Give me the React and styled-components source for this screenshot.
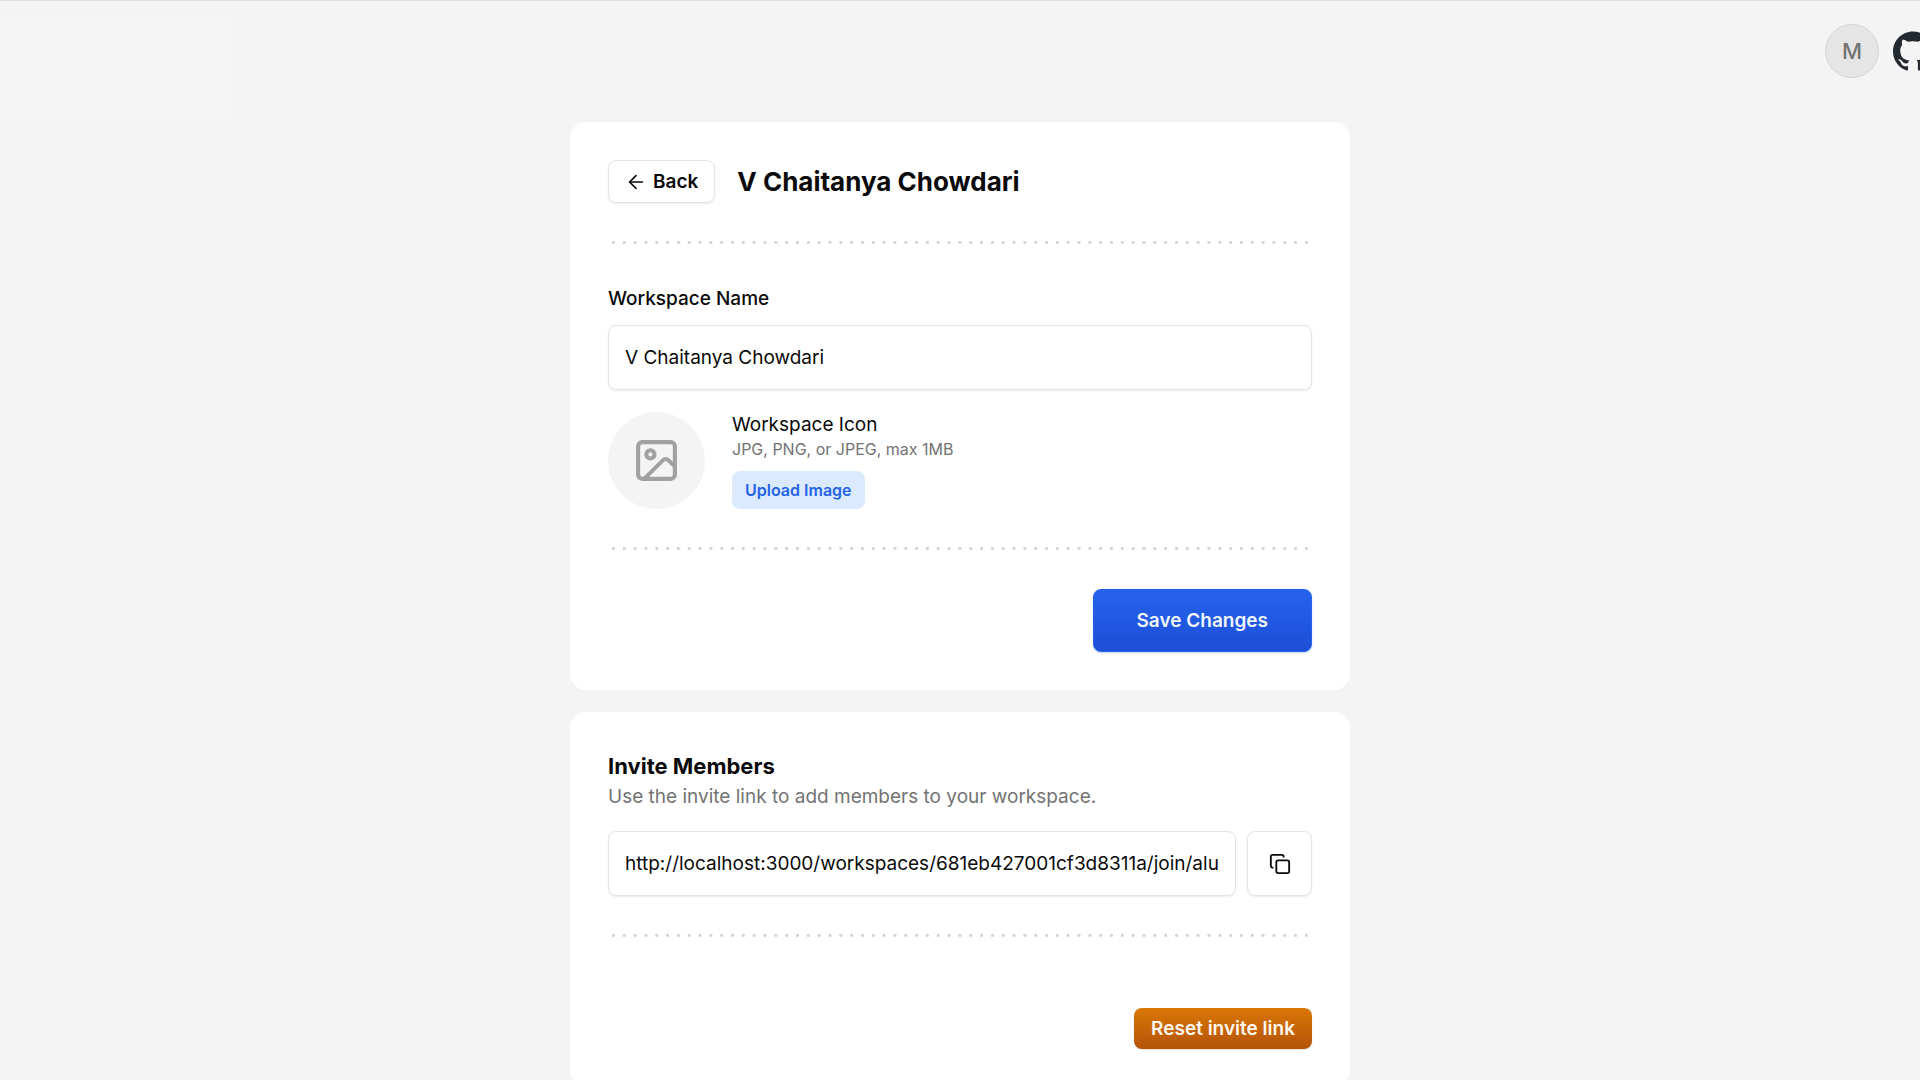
import React, { useState } from "react";
import styled, { createGlobalStyle, css } from "styled-components";
import { ArrowLeft, Copy, Image } from "lucide-react";
import { SiGithub } from "react-icons/si";

const GlobalStyle = createGlobalStyle`
  * {
    box-sizing: border-box;
  }

  body {
    margin: 0;
    background-color: #f4f4f4;
    color: #0a0a0a;
    font-family: Inter, "Liberation Sans", sans-serif;
    font-size: 19px;
    line-height: 24px;
    scrollbar-width: none;
  }

  button,
  input {
    font: inherit;
    color: inherit;
  }

  h1,
  h2,
  p {
    margin: 0;
  }
`;

const Page = styled.div`
  min-height: 100vh;
  border-top: 1px solid #e0e0e0;
  overflow-x: clip;
`;

const Header = styled.header`
  display: flex;
  justify-content: space-between;
  align-items: flex-start;
  padding-top: 16px;
`;

const LogoSpace = styled.div`
  width: 232px;
  height: 102px;
  background-color: #f5f5f5;
`;

const Actions = styled.div`
  display: flex;
  align-items: center;
  gap: 14px;
  padding-top: 7px;
  margin-right: -13px;
`;

const Avatar = styled.button`
  display: flex;
  align-items: center;
  justify-content: center;
  width: 54px;
  height: 54px;
  padding: 0;
  border: 1px solid #d4d4d4;
  border-radius: 50%;
  background-color: #e5e5e5;
  color: #737373;
  font-size: 22px;
  font-weight: 500;
  cursor: pointer;
`;

const GithubLink = styled.a`
  display: flex;
  color: #24292f;
`;

const Content = styled.main`
  display: flex;
  flex-direction: column;
  gap: 22px;
  width: 100%;
  max-width: 780px;
  margin: 0 auto;
  padding: 3px 0 22px;
`;

const Card = styled.section`
  padding: 38px;
  border-radius: 16px;
  background-color: #ffffff;
`;

const TitleRow = styled.div`
  display: flex;
  align-items: center;
  gap: 22px;
`;

const Title = styled.h1`
  font-size: 26px;
  line-height: 32px;
  font-weight: 700;
`;

const outlined = css`
  border: 1px solid #e5e5e5;
  border-radius: 8px;
  background-color: #ffffff;
  box-shadow: 0 1px 2px rgba(0, 0, 0, 0.08);
`;

const BackButton = styled.button`
  ${outlined}
  display: flex;
  align-items: center;
  gap: 6px;
  height: 43px;
  padding: 0 16px;
  font-weight: 600;
  cursor: pointer;
`;

const DottedLine = styled.hr`
  height: 3px;
  margin: ${(props) => props.$margin || "38px 0"};
  border: none;
  background-image: radial-gradient(circle, #d0d0d0 1px, transparent 2px);
  background-size: calc(100% / 65) 3px;
`;

const Field = styled.div`
  display: flex;
  flex-direction: column;
  gap: 14px;
`;

const Label = styled.label`
  font-weight: 500;
`;

const TextInput = styled.input`
  ${outlined}
  flex: 1;
  width: 100%;
  min-width: 0;
  min-height: 65px;
  padding: 0 16px;
  outline: none;
`;

const IconRow = styled.div`
  display: flex;
  align-items: center;
  gap: 27px;
  margin-top: 22px;
`;

const IconPreview = styled.div`
  display: flex;
  align-items: center;
  justify-content: center;
  width: 97px;
  height: 97px;
  border-radius: 50%;
  background-color: #f4f4f4;
  color: #a1a1a1;
`;

const IconInfo = styled.div`
  display: flex;
  flex-direction: column;
  align-items: flex-start;
`;

const Muted = styled.p`
  color: #737373;
  font-size: ${(props) => (props.$small ? "16px" : "19px")};
`;

const UploadButton = styled.button`
  height: 38px;
  margin-top: 10px;
  padding: 0 13px;
  border: none;
  border-radius: 8px;
  background-color: #dbeafe;
  color: #2563eb;
  font-size: 16px;
  font-weight: 600;
  cursor: pointer;
`;

const Footer = styled.div`
  display: flex;
  justify-content: flex-end;
`;

const SaveButton = styled.button`
  height: 63px;
  padding: 0 43px;
  border: 1px solid #2563eb;
  border-radius: 8px;
  background-image: linear-gradient(#2563eb, #1d4ed8);
  color: #eff6ff;
  font-weight: 600;
  box-shadow: 0 1px 2px rgba(37, 99, 235, 0.3);
  cursor: pointer;
`;

const ResetButton = styled.button`
  height: 41px;
  padding: 0 17px;
  border: none;
  border-radius: 8px;
  background-image: linear-gradient(#d97706, #b45309);
  color: #fff7ed;
  font-weight: 600;
  box-shadow: 0 1px 2px rgba(0, 0, 0, 0.1);
  cursor: pointer;
`;

const SectionTitle = styled.h2`
  margin-bottom: 3px;
  font-size: 22px;
  line-height: 32px;
  font-weight: 700;
`;

const InviteRow = styled.div`
  display: flex;
  gap: 11px;
  margin-top: 22px;
`;

const CopyButton = styled.button`
  ${outlined}
  display: flex;
  align-items: center;
  justify-content: center;
  width: 65px;
  height: 65px;
  padding: 0;
  cursor: pointer;
`;

const inviteLink =
  "http://localhost:3000/workspaces/681eb427001cf3d8311a/join/alu";

function WorkspaceForm() {
  const [name, setName] = useState("V Chaitanya Chowdari");

  return (
    <Card>
      <TitleRow>
        <BackButton type="button">
          <ArrowLeft size={22} strokeWidth={1.8} />
          Back
        </BackButton>
        <Title>V Chaitanya Chowdari</Title>
      </TitleRow>
      <DottedLine $margin="38px 0 43px" />
      <Field>
        <Label htmlFor="workspace-name">Workspace Name</Label>
        <TextInput
          id="workspace-name"
          value={name}
          onChange={(e) => setName(e.target.value)}
        />
      </Field>
      <IconRow>
        <IconPreview>
          <Image size={49} />
        </IconPreview>
        <IconInfo>
          <p>Workspace Icon</p>
          <Muted $small>JPG, PNG, or JPEG, max 1MB</Muted>
          <UploadButton type="button">Upload Image</UploadButton>
        </IconInfo>
      </IconRow>
      <DottedLine $margin="38px 0 39px" />
      <Footer>
        <SaveButton type="button">Save Changes</SaveButton>
      </Footer>
    </Card>
  );
}

function InviteMembers() {
  function handleCopy() {
    navigator.clipboard.writeText(inviteLink);
  }

  return (
    <Card>
      <SectionTitle>Invite Members</SectionTitle>
      <Muted>Use the invite link to add members to your workspace.</Muted>
      <InviteRow>
        <TextInput aria-label="Invite link" value={inviteLink} readOnly />
        <CopyButton type="button" aria-label="Copy invite link" onClick={handleCopy}>
          <Copy size={22} />
        </CopyButton>
      </InviteRow>
      <DottedLine $margin="38px 0 71px" />
      <Footer>
        <ResetButton type="button">Reset invite link</ResetButton>
      </Footer>
    </Card>
  );
}

export default function App() {
  return (
    <Page>
      <GlobalStyle />
      <Header>
        <LogoSpace />
        <Actions>
          <Avatar type="button">M</Avatar>
          <GithubLink href="#" aria-label="GitHub">
            <SiGithub size={40} />
          </GithubLink>
        </Actions>
      </Header>
      <Content>
        <WorkspaceForm />
        <InviteMembers />
      </Content>
    </Page>
  );
}
